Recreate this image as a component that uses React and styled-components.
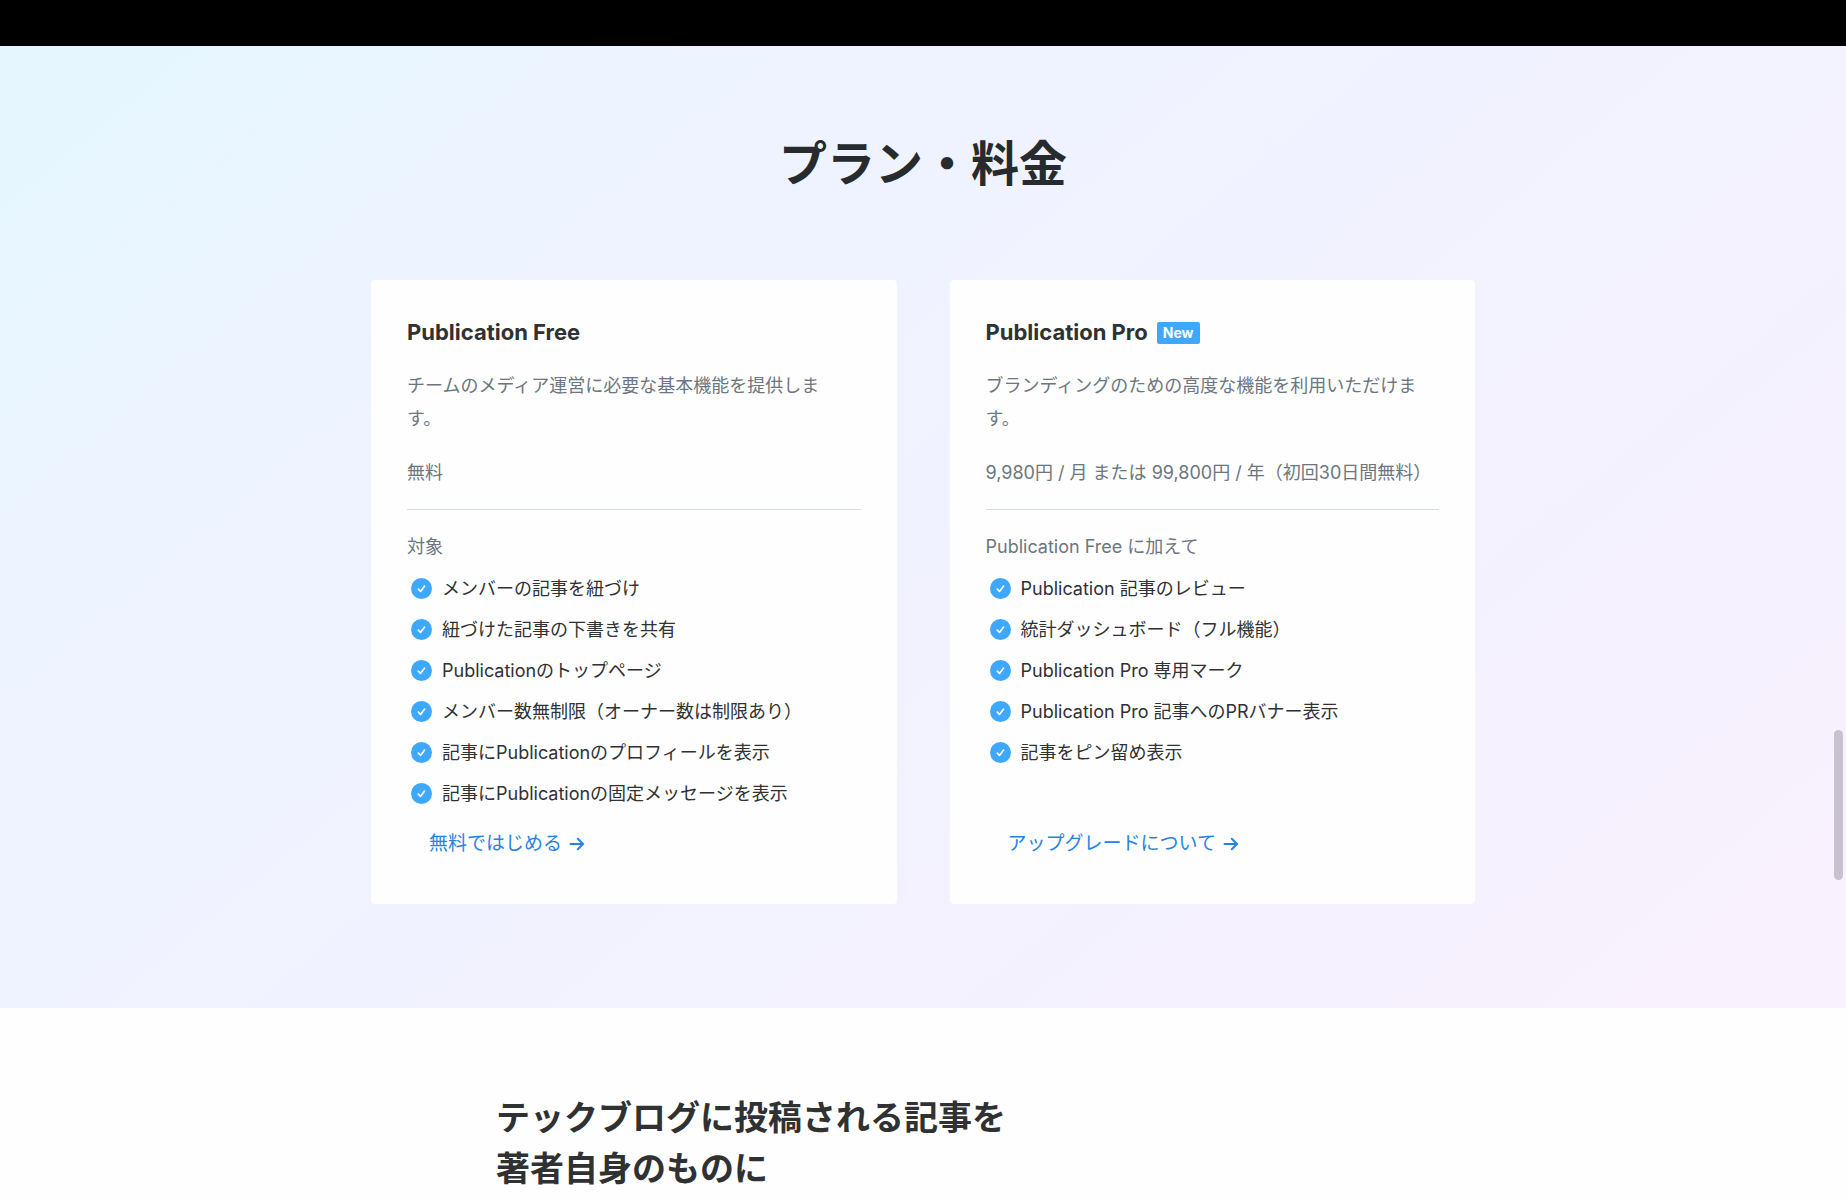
import React from "react";
import styled, { createGlobalStyle } from "styled-components";

const GlobalStyle = createGlobalStyle`
  *, *::before, *::after { box-sizing: border-box; }
  html { scrollbar-width: none; }
  body {
    margin: 0;
    background: #fefefe;
    color: #2f3133;
    font-family: Inter, "Noto Sans CJK JP", sans-serif;
    font-size: 18px;
    line-height: 33px;
  }
  h1, h2, p, ul { margin: 0; padding: 0; }
`;

const Page = styled.div`
  height: 100vh;
  overflow: hidden;
`;

const TopBand = styled.header`
  height: 46px;
  background: #000;
`;

const Pricing = styled.section`
  padding: 82px 24px 104px;
  background: linear-gradient(140deg, #e6f6ff 6%, #eef3ff 28%, #f1f2ff 48%, #f4f1ff 72%, #f9f2fe 95%);
`;

const PricingTitle = styled.h1`
  color: #272b2e;
  font-size: 48px;
  line-height: 72px;
  text-align: center;
`;

const Plans = styled.div`
  display: grid;
  grid-template-columns: 1fr 1fr;
  gap: 53px;
  max-width: 1104px;
  margin: 80px auto 0;
`;

const Card = styled.article`
  display: flex;
  flex-direction: column;
  padding: 36px 36px 44px;
  border-radius: 4px;
  background: #fefefe;
`;

const PlanName = styled.h2`
  display: flex;
  align-items: center;
  gap: 9px;
  font-size: 22px;
  line-height: 33px;
`;

const Badge = styled.span`
  padding: 0 6px;
  border-radius: 2px;
  background: #3ea8ff;
  color: #fff;
  font-size: 14px;
  line-height: 22px;
`;

const Description = styled.p`
  margin-top: 20px;
  color: #6b767f;
  white-space: pre-line;
`;

const Price = styled.p`
  margin-top: 21px;
  padding-bottom: 20px;
  border-bottom: 1px solid #d6dde0;
  color: #6b767f;
  white-space: nowrap;
`;

const Lead = styled.p`
  margin-top: 20px;
  color: #6b767f;
`;

const Features = styled.ul`
  display: grid;
  gap: 8px;
  margin: 9px 0 17px;
  padding-left: 4px;
  list-style: none;
`;

const Feature = styled.li`
  display: flex;
  align-items: center;
  gap: 10px;
`;

const PlanLink = styled.a`
  display: inline-flex;
  align-items: center;
  align-self: flex-start;
  gap: 7px;
  margin-top: auto;
  padding-left: 22px;
  color: #2483e2;
  font-size: 19px;
  line-height: 33px;
  text-decoration: none;
`;

const Story = styled.section`
  max-width: 854px;
  margin: 0 auto;
  padding-top: 84px;
`;

const StoryTitle = styled.h2`
  font-size: 34px;
  line-height: 51px;
  white-space: pre-line;
`;

const ScrollThumb = styled.div`
  position: fixed;
  top: 730px;
  right: 3px;
  width: 9px;
  height: 150px;
  border-radius: 5px;
  background: #c8c2d0;
`;

const CheckIcon = () => (
  <svg width="21" height="21" viewBox="0 0 21 21" fill="none" aria-hidden="true">
    <circle cx="10.5" cy="10.5" r="10.5" fill="#3ea8ff" />
    <path d="M7.3 11.1l2.2 2.3 4.1-5.3" stroke="#fff" strokeWidth="1.6" strokeLinecap="round" strokeLinejoin="round" />
  </svg>
);

const ArrowIcon = () => (
  <svg width="16" height="16" viewBox="0 0 16 16" fill="none" aria-hidden="true">
    <path d="M1.5 8h12.7M8.8 2.8L14 8l-5.2 5.2" stroke="currentColor" strokeWidth="2" strokeLinecap="round" strokeLinejoin="round" />
  </svg>
);

const plans = [
  {
    name: "Publication Free",
    description: "チームのメディア運営に必要な基本機能を提供しま\nす。",
    price: "無料",
    lead: "対象",
    features: [
      "メンバーの記事を紐づけ",
      "紐づけた記事の下書きを共有",
      "Publicationのトップページ",
      "メンバー数無制限（オーナー数は制限あり）",
      "記事にPublicationのプロフィールを表示",
      "記事にPublicationの固定メッセージを表示",
    ],
    link: "無料ではじめる",
  },
  {
    name: "Publication Pro",
    badge: "New",
    description: "ブランディングのための高度な機能を利用いただけま\nす。",
    price: "9,980円 / 月 または 99,800円 / 年（初回30日間無料）",
    lead: "Publication Free に加えて",
    features: [
      "Publication 記事のレビュー",
      "統計ダッシュボード（フル機能）",
      "Publication Pro 専用マーク",
      "Publication Pro 記事へのPRバナー表示",
      "記事をピン留め表示",
    ],
    link: "アップグレードについて",
  },
];

const Plan = ({ plan }) => (
  <Card>
    <PlanName>
      {plan.name}
      {plan.badge && <Badge>{plan.badge}</Badge>}
    </PlanName>
    <Description>{plan.description}</Description>
    <Price>{plan.price}</Price>
    <Lead>{plan.lead}</Lead>
    <Features>
      {plan.features.map((text) => (
        <Feature key={text}>
          <CheckIcon />
          <span>{text}</span>
        </Feature>
      ))}
    </Features>
    <PlanLink href="#start">
      {plan.link}
      <ArrowIcon />
    </PlanLink>
  </Card>
);

export default function App() {
  return (
    <Page lang="ja">
      <GlobalStyle />
      <TopBand />
      <main>
        <Pricing>
          <PricingTitle>プラン・料金</PricingTitle>
          <Plans>
            {plans.map((plan) => (
              <Plan key={plan.name} plan={plan} />
            ))}
          </Plans>
        </Pricing>
        <Story>
          <StoryTitle>{"テックブログに投稿される記事を\n著者自身のものに"}</StoryTitle>
        </Story>
      </main>
      <ScrollThumb />
    </Page>
  );
}
